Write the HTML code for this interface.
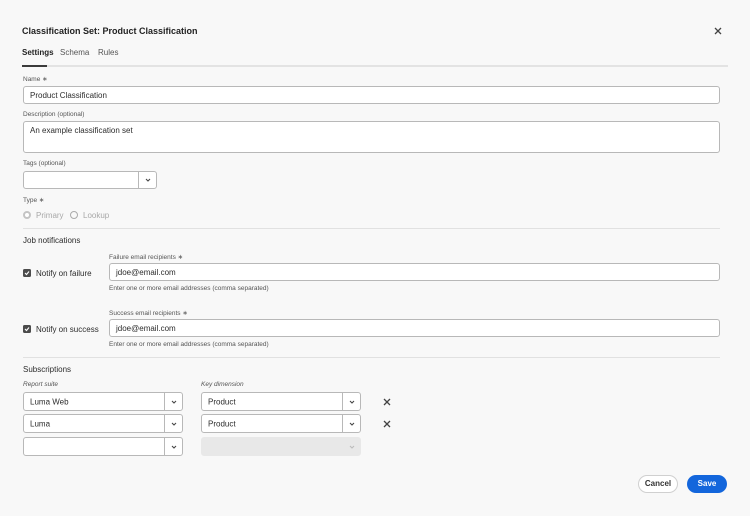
<!DOCTYPE html>
<html><head><style>
*{box-sizing:border-box;margin:0;padding:0}
body{width:750px;height:516px;background:#f8f8f8;font-family:"Liberation Sans",sans-serif;color:#2c2c2c;position:relative;overflow:hidden}
.a{position:absolute;white-space:nowrap}
.lbl{font-size:6.5px;color:#555}
.t{font-size:8px}
.in{position:absolute;background:#fff;border:1px solid #b8b8b8;border-radius:3px;font-size:8px;padding-left:6px;display:flex;align-items:center}
.cb{position:absolute;background:#fff;border:1px solid #b8b8b8;border-radius:3px;font-size:8px}
.cb span{position:absolute;left:6px;top:50%;transform:translateY(-50%)}
.cb i{position:absolute;right:0;top:0;bottom:0;width:18px;border-left:1px solid #b8b8b8}
.cb svg{position:absolute;right:5px;top:50%;margin-top:-3px}
.chk{position:absolute;width:8px;height:8px;background:#4b4b4b;border-radius:1.5px}
.line{position:absolute;height:1px;background:#e1e1e1}
.x{position:absolute}
</style></head><body>
<div class="a" style="left:22px;top:26px;font-size:9px;font-weight:bold;color:#222">Classification Set: Product Classification</div>
<svg class="x" style="left:714px;top:27px" width="8" height="8"><path d="M1 1L7 7M7 1L1 7" stroke="#444" stroke-width="1.3"/></svg>
<div class="a t" style="left:22px;top:48px;font-weight:bold;color:#222">Settings</div>
<div class="a t" style="left:60px;top:48px;color:#555">Schema</div>
<div class="a t" style="left:98px;top:48px;color:#555">Rules</div>
<div class="line" style="left:22px;top:65px;width:706px;height:2px;background:#e3e3e3"></div>
<div class="line" style="left:22px;top:65px;width:25px;height:2px;background:#3b3b3b"></div>

<div class="a lbl" style="left:23px;top:75px">Name ∗</div>
<div class="in" style="left:23px;top:86px;width:697px;height:18px">Product Classification</div>
<div class="a lbl" style="left:23px;top:111px">Description (optional)</div>
<div class="in" style="left:23px;top:121px;width:697px;height:32px;align-items:flex-start;padding-top:4px">An example classification set</div>
<div class="a lbl" style="left:23px;top:160px">Tags (optional)</div>
<div class="cb" style="left:23px;top:171px;width:134px;height:18px"><i></i><svg width="6" height="6"><path d="M1 2L3 4L5 2" stroke="#444" fill="none" stroke-width="1.1"/></svg></div>
<div class="a lbl" style="left:23px;top:196px">Type ∗</div>
<div class="x" style="left:23px;top:211px;width:8px;height:8px;border-radius:50%;background:#fff;border:2.5px solid #c4c4c4"></div>
<div class="a t" style="left:36px;top:211px;color:#a8a8a8">Primary</div>
<div class="x" style="left:70px;top:211px;width:8px;height:8px;border-radius:50%;border:1px solid #aaa"></div>
<div class="a t" style="left:83px;top:211px;color:#a8a8a8">Lookup</div>
<div class="line" style="left:23px;top:228px;width:697px"></div>

<div class="a t" style="left:23px;top:236px">Job notifications</div>
<div class="a lbl" style="left:109px;top:253px">Failure email recipients ∗</div>
<div class="chk" style="left:23px;top:269px"><svg width="8" height="8" style="position:absolute"><path d="M2 4L3.5 5.5L6 2.5" stroke="#fff" fill="none" stroke-width="1.1"/></svg></div>
<div class="a t" style="left:36px;top:269px">Notify on failure</div>
<div class="in" style="left:109px;top:263px;width:611px;height:18px">jdoe@email.com</div>
<div class="a lbl" style="left:109px;top:285px">Enter one or more email addresses (comma separated)</div>
<div class="a lbl" style="left:109px;top:309px">Success email recipients ∗</div>
<div class="chk" style="left:23px;top:325px"><svg width="8" height="8" style="position:absolute"><path d="M2 4L3.5 5.5L6 2.5" stroke="#fff" fill="none" stroke-width="1.1"/></svg></div>
<div class="a t" style="left:36px;top:325px">Notify on success</div>
<div class="in" style="left:109px;top:319px;width:611px;height:18px">jdoe@email.com</div>
<div class="a lbl" style="left:109px;top:341px">Enter one or more email addresses (comma separated)</div>
<div class="line" style="left:23px;top:357px;width:697px"></div>

<div class="a t" style="left:23px;top:365px">Subscriptions</div>
<div class="a lbl" style="left:23px;top:381px;font-style:italic">Report suite</div>
<div class="a lbl" style="left:201px;top:381px;font-style:italic">Key dimension</div>

<div class="cb" style="left:23px;top:392px;width:160px;height:19px"><span>Luma Web</span><i></i><svg width="6" height="6"><path d="M1 2L3 4L5 2" stroke="#444" fill="none" stroke-width="1.1"/></svg></div>
<div class="cb" style="left:201px;top:392px;width:160px;height:19px"><span>Product</span><i></i><svg width="6" height="6"><path d="M1 2L3 4L5 2" stroke="#444" fill="none" stroke-width="1.1"/></svg></div>
<svg class="x" style="left:383px;top:398px" width="8" height="8"><path d="M1 1L7 7M7 1L1 7" stroke="#444" stroke-width="1.3"/></svg>
<div class="cb" style="left:23px;top:414px;width:160px;height:19px"><span>Luma</span><i></i><svg width="6" height="6"><path d="M1 2L3 4L5 2" stroke="#444" fill="none" stroke-width="1.1"/></svg></div>
<div class="cb" style="left:201px;top:414px;width:160px;height:19px"><span>Product</span><i></i><svg width="6" height="6"><path d="M1 2L3 4L5 2" stroke="#444" fill="none" stroke-width="1.1"/></svg></div>
<svg class="x" style="left:383px;top:420px" width="8" height="8"><path d="M1 1L7 7M7 1L1 7" stroke="#444" stroke-width="1.3"/></svg>
<div class="cb" style="left:23px;top:437px;width:160px;height:19px"><i></i><svg width="6" height="6"><path d="M1 2L3 4L5 2" stroke="#444" fill="none" stroke-width="1.1"/></svg></div>
<div class="cb" style="left:201px;top:437px;width:160px;height:19px;background:#e8e8e8;border-color:#e8e8e8"><svg width="6" height="6"><path d="M1 2L3 4L5 2" stroke="#bbb" fill="none" stroke-width="1.1"/></svg></div>

<div class="a" style="left:638px;top:475px;width:40px;height:18px;border:1.5px solid #d0d0d0;border-radius:9px;background:#fff;font-size:8px;font-weight:bold;color:#333;text-align:center;line-height:15px">Cancel</div>
<div class="a" style="left:687px;top:475px;width:40px;height:18px;border-radius:9px;background:#1366dc;font-size:8px;font-weight:bold;color:#fff;text-align:center;line-height:18px">Save</div>
</body></html>
